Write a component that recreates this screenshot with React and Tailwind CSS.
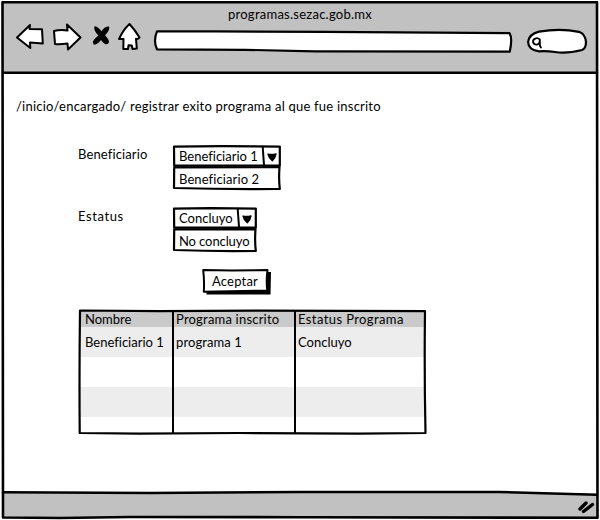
import React from "react";

function Sketch({ w, h, children }) {
  return (
    <svg
      className="pointer-events-none absolute left-0 top-0 overflow-visible"
      width={w}
      height={h}
      viewBox={`0 0 ${w} ${h}`}
      fill="none"
      stroke="#000"
      strokeWidth="2.2"
      strokeLinecap="round"
      strokeLinejoin="round"
    >
      {children}
    </svg>
  );
}

function NavIcon({ w, className, fill = "#fff", d }) {
  return (
    <svg className={className} width={w} height="30" viewBox={`0 0 ${w} 30`} fill={fill} stroke="#000" strokeWidth="2" strokeLinejoin="round" strokeLinecap="round">
      <path d={d} />
    </svg>
  );
}

function Toolbar() {
  return (
    <header className="h-[73px] bg-[#c1c1c1]">
      <div className="flex h-[21px] justify-center pt-[4px]">
        <span className="tracking-[0.25px]">programas.sezac.gob.mx</span>
      </div>
      <div className="flex h-[30px] items-start pl-[14px]">
        <NavIcon w={28} d="M1 15.5 L14 3 L13.5 7 L26 7.3 L26.8 21.5 L14 20.5 L14.3 26 Z" />
        <NavIcon w={30} className="ml-[8px]" d="M2 9 Q8 7.5 15.5 8.5 L15 2.5 L28.5 15.5 L16 27.5 L15.5 21.5 Q8 22.5 3 22 Z" />
        <svg className="ml-[10px]" width="18" height="30" viewBox="0 0 18 30" fill="#000">
          <path d="M2.6 4.2 Q5.5 4.2 9.5 9.3 Q12 4.5 17 4.6 Q18.4 7.5 13 13.3 Q17.3 18 17 20.3 Q15.8 22.8 13 22 Q10.5 20.5 9 18 Q6.5 21.8 2.8 22.8 Q0.6 22.8 1 19.6 Q2.5 16.5 6.3 13.5 Q1 7.5 2.6 4.2 Z" />
        </svg>
        <NavIcon w={24} className="ml-[7px]" d="M12.5 2 Q18 8 22.5 15.5 Q21 17.5 19 16.8 L19.8 26.5 L15.5 27 L14.8 23.5 L11.5 23.3 L11 27 L6.3 27 L6.5 17 L2 17 Q6 8 12.5 2 Z" />
        <div className="relative ml-[14px] mt-[9px] h-[20px] w-[358px]">
          <Sketch w={358} h={20}>
            <path fill="#fff" d="M2 0.4 L60 .4 L170 .8 L354.5 2.2 Q357.7 7 354.8 20.6 L160 20.4 L90 18.8 L2 18.3 Q-2 10 2 0.4 Z" />
          </Sketch>
        </div>
        <div className="relative ml-[15px] mt-[7px] h-[24px] w-[59px]">
          <Sketch w={59} h={24}>
            <path fill="#fff" d="M11 2.6 Q32 -.9 51 2.8 Q57 4.5 58 13 Q58 19.5 54 21 Q38 25 27 23 Q18 21.8 11 22.4 Q.4 21 .1 13 Q1 5 11 2.6 Z" />
            <path strokeWidth="1.8" d="M12 11.2 Q11 8.8 8 9.3 Q4.8 10 5 13 Q6 16 9 15.6 Q12 15 11.8 10.5 L12 17 L13 18.5" />
          </Sketch>
        </div>
      </div>
    </header>
  );
}

function Select({ width, arrow, value, option, tv, to }) {
  return (
    <div className="relative h-[46px]" style={{ width }}>
      <div className="flex h-[22px] items-center pl-[6px]">
        <span className={tv}>{value}</span>
      </div>
      <div className="flex h-[23px] items-center pl-[6px]">
        <span className={to}>{option}</span>
      </div>
      <Sketch w={width} h={46}>
        <path d={`M1 1.7 L${width * 0.45} 1.2 L${width - 1.2} 1.6 L${width - 1.2} 20.7 L1.2 20.7 Z`} />
        <path d={`M1.2 22.4 L${width - 1.5} 22.2 Q${width - 2.4} 34 ${width - 1.2} 44 Q${width / 2} 44.6 1 43 Z`} />
        <path strokeWidth="2" d={`M${arrow - 0.3} 1.8 L${arrow + 1} 20`} />
        <path fill="#000" strokeWidth="1.4" d={`M${arrow + 5} 9.2 Q${arrow + 9} 10 ${arrow + 13} 9 Q${arrow + 12.5} 12.5 ${arrow + 9.3} 15.7 Q${arrow + 6} 13.5 ${arrow + 5} 9.2 Z`} />
      </Sketch>
    </div>
  );
}

function Records() {
  return (
    <div className="relative mt-[15px] ml-[79px] h-[124px] w-[347px]">
      <table className="w-[347px] table-fixed border-collapse text-left">
        <colgroup>
          <col className="w-[94px]" />
          <col className="w-[122px]" />
          <col className="w-[131px]" />
        </colgroup>
        <thead>
          <tr className="h-[17px] bg-[#cacaca] leading-[15px]">
            <th className="p-0 pt-[2px] pl-[6px] font-normal"><span>Nombre</span></th>
            <th className="p-0 pt-[2px] pl-[3px] font-normal"><span className="tracking-[0.2px]">Programa inscrito</span></th>
            <th className="p-0 pt-[2px] pl-[3px] font-normal"><span className="tracking-[0.4px]">Estatus Programa</span></th>
          </tr>
        </thead>
        <tbody>
          <tr className="h-[30px] bg-[#ededed]">
            <td className="p-0 pl-[6px]"><span>Beneficiario 1</span></td>
            <td className="p-0 pl-[3px]"><span className="tracking-[0.1px]">programa 1</span></td>
            <td className="p-0 pl-[3px]"><span>Concluyo</span></td>
          </tr>
          <tr className="h-[30px]"><td /><td /><td /></tr>
          <tr className="h-[30px] bg-[#ededed]"><td /><td /><td /></tr>
          <tr className="h-[17px]"><td /><td /><td /></tr>
        </tbody>
      </table>
      <Sketch w={347} h={124}>
        <path d="M1 .5 L80 1.2 L180 .6 L346 1.2 Q345.2 60 346.5 123 L280 123.7 L160 123 L60 123.6 L.7 123 Q.2 60 1 .5 Z" />
        <path strokeWidth="2" strokeLinecap="butt" d="M94 1 V123 M216 1 V123" />
      </Sketch>
    </div>
  );
}

export default function App() {
  return (
    <div className="relative flex h-[520px] w-[600px] flex-col overflow-hidden bg-white font-['Lato','Liberation_Sans',sans-serif] text-[13px] leading-[18px] text-black [font-variant-ligatures:none]">
      <div className="mx-[2px] mt-[1px] flex h-[517px] flex-col">
        <Toolbar />
        <main className="-mx-[2px] h-[419px]">
          <p className="pl-[16px] pt-[23px]"><span className="tracking-[0.22px]">/inicio/encargado/ registrar exito programa al que fue inscrito</span></p>
          <div className="mt-[30px] flex pl-[78px]">
            <div className="w-[95px]"><span className="tracking-[0.13px]">Beneficiario</span></div>
            <Select width={108} arrow={90} value="Beneficiario 1" option="Beneficiario 2" tv="tracking-[0px]" to="tracking-[0.1px]" />
          </div>
          <div className="mt-[16px] flex pl-[78px]">
            <div className="w-[95px]"><span className="tracking-[0.6px]">Estatus</span></div>
            <Select width={84} arrow={65} value="Concluyo" option="No concluyo" tv="tracking-[0px]" to="tracking-[-0.1px]" />
          </div>
          <button className="relative ml-[202px] mt-[16px] flex h-[26px] w-[69px] items-center pb-[3px] pl-[10px]">
            <span className="relative z-10 tracking-[0.2px]">Aceptar</span>
            <Sketch w={69} h={26}>
              <path fill="#000" stroke="none" d="M4 3 H69 L68.5 25.5 H4.5 Z" />
              <path fill="#fff" strokeWidth="2" d="M1.2 1 L30 1.4 L65.5 1 Q64 12 65.3 21.5 L1.8 22.7 Q2.5 12 1.2 1 Z" />
            </Sketch>
          </button>
          <Records />
        </main>
        <footer className="h-[25px] bg-[#c1c1c1]" />
      </div>
      <Sketch w={600} h={520}>
        <path fill="#fff" stroke="none" d="M500 490 L597 490 L597 494.5 L500 492 Z" />
        <path strokeWidth="2.6" d="M2.5 2.3 H597 Q597.8 250 597.5 517.8 L300 517.2 L130 517 L60 518 L3 517.5 Q2 300 2.5 2.3 Z" />
        <path strokeWidth="2.6" d="M3 72.7 H597 M3 492.3 L150 493 L300 492 L500 492 L597 494.8" />
        <path strokeWidth="3.4" d="M580 509 L586 503 M583.5 511.5 L592.5 504.5" />
      </Sketch>
    </div>
  );
}
